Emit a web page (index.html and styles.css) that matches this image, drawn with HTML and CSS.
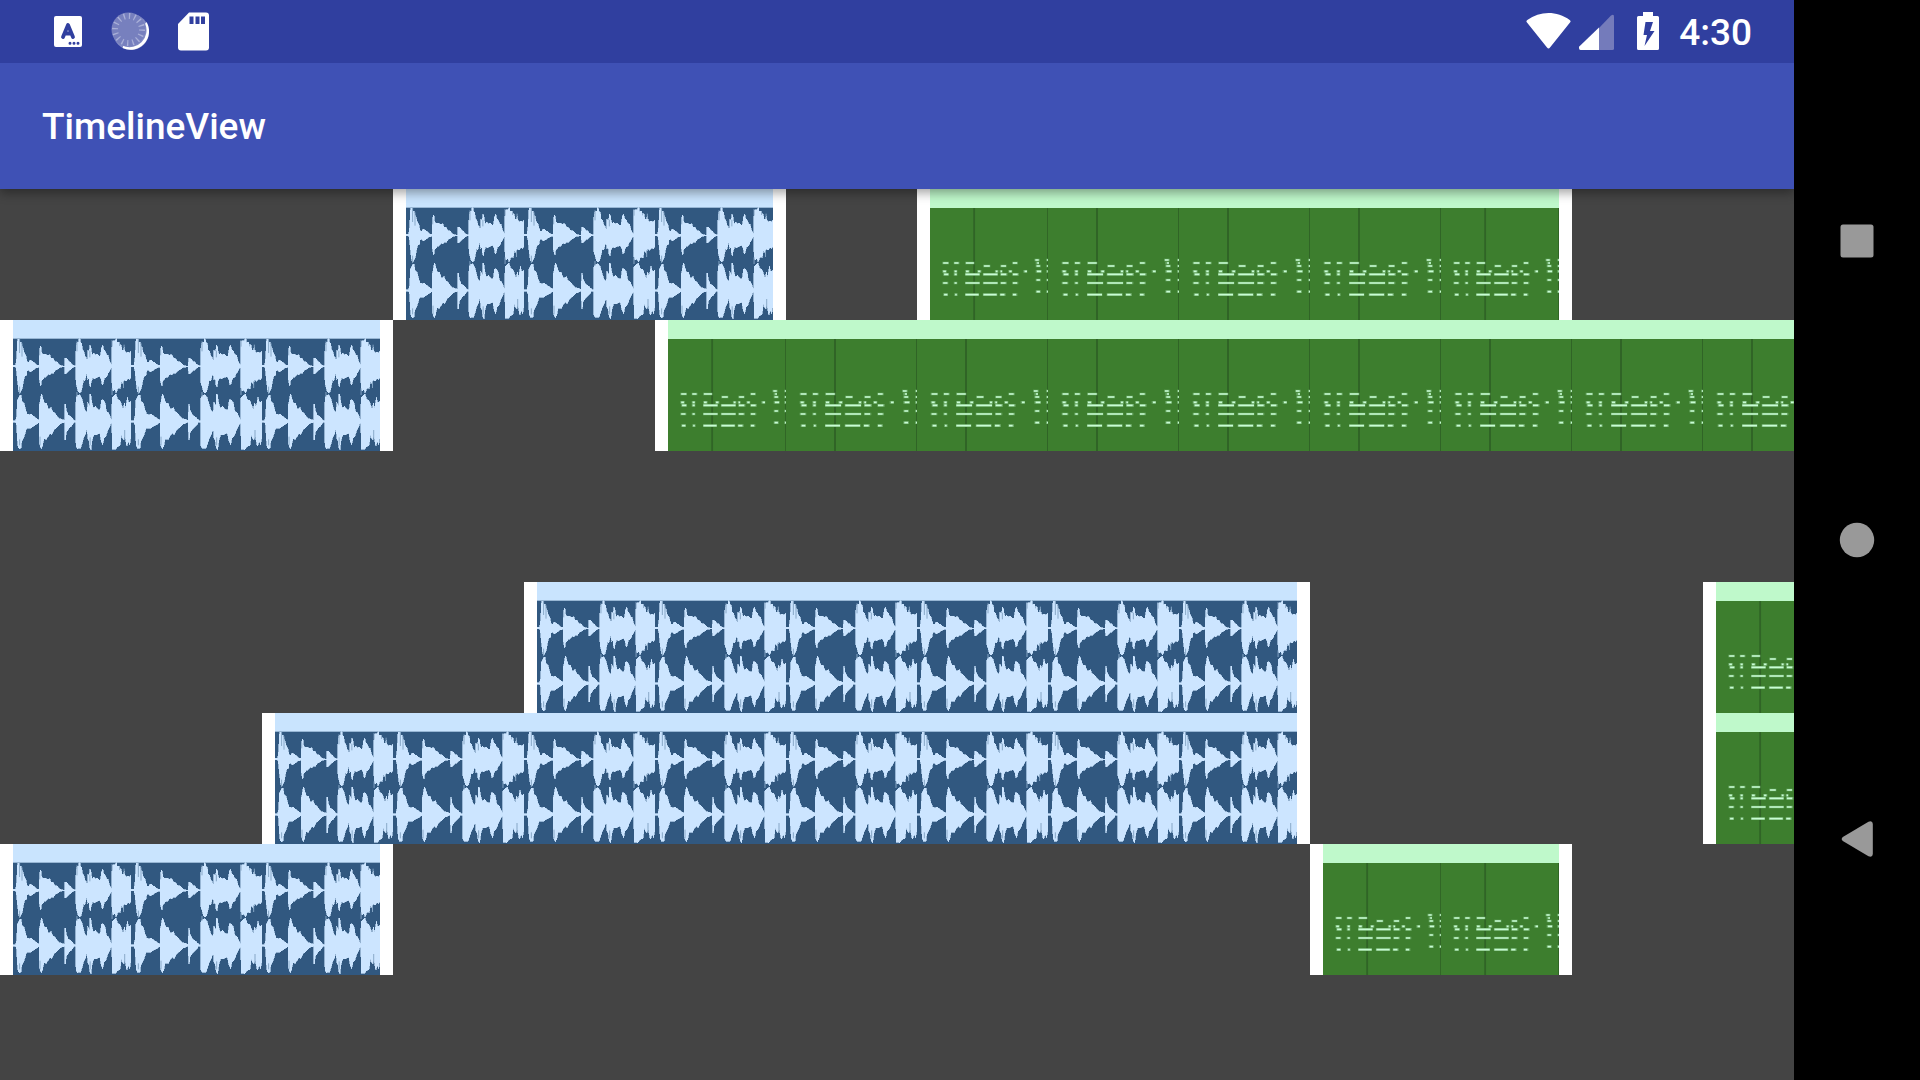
FILE: index.html
```html
<!DOCTYPE html>
<html lang="en">
<head>
<meta charset="utf-8">
<title>TimelineView</title>
<link rel="stylesheet" href="styles.css">
</head>
<body>
<svg class="sprites" aria-hidden="true">
  <!-- One bar of stereo audio -->
  <symbol id="audio" viewBox="0 0 393 393" preserveAspectRatio="none">
    <rect class="audio-body" y="54" width="393" height="339"/>
    <rect class="audio-head" width="393" height="56"/>
    <g class="wave" transform="translate(-3 54)">
      <polygon points="3,82 12,82 15,60 18,10 19,3 24,3 25,12 30,12 33,25 36,28 40,45 45,50 48,62 51,72 57,72 60,66 66,68 70,72 75,74 80,79 84,82 90,82 91,38 94,25 97,27 98,42 102,48 112,48 118,52 125,50 130,60 138,62 142,70 150,72 155,77 160,82 168,84 175,84 176,60 183,62 188,70 194,72 200,79 207,83 212,83 213,30 216,14 222,12 223,2 226,2 228,14 232,16 234,35 238,38 242,52 246,58 249,65 251,68 252,35 256,42 258,32 259,22 262,24 265,45 268,50 272,45 276,52 280,48 286,50 290,55 294,55 298,28 302,22 305,35 310,38 314,50 320,52 324,68 330,80 332,80 333,10 338,8 344,8 345,2 348,2 349,14 356,12 359,30 361,20 364,22 365,36 370,38 373,28 376,40 380,45 384,42 392,45 395,40 396,83 396,86 396,115 392,125 386,122 380,130 374,125 370,140 364,130 360,152 352,150 347,166 342,155 336,160 333,150 332,90 330,88 324,100 320,105 314,118 308,120 304,135 300,142 297,125 292,115 284,118 276,122 268,120 264,130 261,146 258,140 256,120 252,125 249,105 246,115 242,130 238,125 234,145 230,160 225,166 220,160 216,145 213,135 212,86 207,86 200,90 194,96 188,98 183,105 176,108 175,86 160,88 152,94 145,97 138,105 130,105 126,111 120,108 113,117 108,118 102,125 98,128 96,143 94,142 91,125 90,87 80,90 72,95 66,100 60,102 57,96 50,98 48,112 42,115 38,130 34,150 30,160 26,166 22,160 18,130 15,100 12,86 3,86"/>
      <polygon points="3,248 12,248 15,235 18,185 24,175 26,171 30,172 33,190 40,195 45,215 50,228 57,230 64,228 72,235 80,240 90,247 91,200 95,182 97,168 100,170 102,180 108,195 114,195 122,215 130,208 134,220 142,225 150,235 158,242 175,247 176,198 178,198 180,215 186,230 194,235 202,242 207,248 212,248 213,180 218,172 226,170 232,180 236,195 242,215 250,225 252,192 258,205 259,168 262,168 265,190 270,210 278,205 286,215 294,215 298,185 304,185 310,195 314,220 322,225 330,245 332,245 333,180 340,172 346,168 352,185 360,188 364,200 370,215 374,195 378,210 384,178 389,195 395,190 396,248 396,252 395,300 392,320 388,310 382,325 376,295 370,305 364,290 360,322 352,325 344,335 334,333 332,255 330,255 320,275 312,295 306,300 302,320 297,310 292,285 282,290 272,290 266,310 263,335 259,330 256,308 252,300 250,270 244,290 238,300 232,320 228,330 218,332 213,325 212,252 206,252 200,262 194,268 188,272 180,285 178,307 176,305 175,252 160,258 150,268 140,275 132,290 126,285 120,295 114,305 106,302 101,325 97,332 91,318 90,253 80,260 68,266 60,272 54,270 48,272 42,290 38,300 32,310 30,330 24,332 20,328 18,310 15,262 12,252 3,252"/>
    </g>
    <path class="wave-edge" d="M22 57v42M30 70v40M89 90v16M213 64v30M256 92v20M330 60v20M370 74v16M22 200v22M213 216v14M330 205v20M368 184v20M22 358v18M90 350v26M257 352v24M372 330v30"/>
  </symbol>

  <!-- One bar of MIDI notes -->
  <symbol id="midi" viewBox="0 0 393 393" preserveAspectRatio="none">
    <rect class="midi-body" y="54" width="393" height="339"/>
    <rect class="midi-head" width="393" height="57"/>
    <path class="midi-bar" d="M147 57V393"/>
    <path class="midi-end" d="M391.500 57V393"/>
    <g transform="translate(-6 198)">
      <path class="note-glow" d="M47 24h22m16 0h19m19 0h31m126 0h19m59 0h11M183 33h24m33 0h21m97 0h17m18 0h6M354 15h17m22 0h6M47 49h15m23 0h12m26 0h15m25 0h14m45 0h12m4 0h10m19 0h13m37 0h13m28 0h20m15 0h6M50 58h19m16 0h12m26 0h49m10 0h50m8 0h24m16 0h22M47 84h20m18 0h12m26 0h49m10 0h50m8 0h22m18 0h20M358 75h17m18 0h6M358 110h17m18 0h6M50 119h16m21 0h11m25 0h46m13 0h48m8 0h20m22 0h17"/>
      <path class="note" d="M50 24h17m20 0h14m25 0h26m130 0h14m67 0h6M186 33h19m38 0h16m102 0h11m24 0h3M357 15h11m28 0h3M50 49h9m29 0h7m31 0h9m31 0h8m51 0h6m10 0h5m24 0h8m43 0h8m33 0h14m21 0h3M53 58h14m21 0h7m29 0h47m13 0h47m11 0h18m22 0h16M50 84h14m24 0h7m29 0h47m13 0h47m11 0h16m24 0h14M361 75h11m24 0h3M361 110h11m24 0h3M53 119h11m26 0h5m29 0h44m16 0h44m12 0h14m28 0h11"/>
    </g>
  </symbol>
</svg>

<div class="device">
  <div class="app">
    <div class="status-bar">
      <div class="status-group notifications">
        <svg width="28" height="63" viewBox="0 0 28 63" role="img" aria-label="Keyboard">
          <rect y="16" width="28" height="31" rx="2" fill="#fff"/>
          <path d="M9 37l5-12 5 12M10.500 33.500h7" fill="none" stroke="#303f9f" stroke-width="3.800" stroke-linecap="round" stroke-linejoin="round"/>
          <path d="M16 43.300h0M20 43.300h0M24 43.300h0" stroke="#303f9f" stroke-width="3" stroke-linecap="round"/>
        </svg>
        <svg width="38" height="63" viewBox="0 0 38 63" role="img" aria-label="Loading">
          <circle cx="20" cy="32" r="18" fill="#fff" opacity=".4"/>
          <path d="M35 23A18 18 0 0 1 12 47A17.500 17.500 0 0 0 35 23Z" fill="#fff" stroke="#fff" stroke-width="2"/>
          <circle cx="17.500" cy="29.500" r="17" fill="#7780be"/>
          <circle cx="17.500" cy="29.500" r="13.500" fill="none" stroke="#a9afd8" stroke-width="6" stroke-dasharray="1.300 4.002"/>
        </svg>
        <svg width="31" height="63" viewBox="0 0 31 63" role="img" aria-label="SD card">
          <path d="M11 12.500H28a3 3 0 0 1 3 3V47.500a3 3 0 0 1-3 3H3a3 3 0 0 1-3-3V24Z" fill="#fff"/>
          <path d="M11.500 16.500h4v7.500h-4zM17.500 16.500h4v7.500h-4zM23 16.500h4v7.500h-4z" fill="#303f9f"/>
        </svg>
      </div>
      <div class="status-group system">
        <svg width="45" height="63" viewBox="0 0 45 63" role="img" aria-label="Wi-Fi">
          <path d="M.8 22.300Q-.2 21 1.300 20C14 10.700 31 10.700 43.700 20Q45.200 21 44.200 22.300L24 47.500Q22.500 49.500 21 47.500Z" fill="#fff"/>
        </svg>
        <svg class="signal" width="35" height="63" viewBox="0 0 35 63" role="img" aria-label="Mobile signal">
          <path d="M20 28L32 15.500Q35 13.500 35 16.500V48.500Q35 50 33.500 50H20Z" fill="#747bbb"/>
          <path d="M20 27.500V50H1.500Q0 50 0 48V46.800Z" fill="#fff"/>
        </svg>
        <svg class="battery" width="22" height="63" viewBox="0 0 22 63" role="img" aria-label="Battery charging">
          <path d="M6 12H16V16H20.500Q22 16 22 17.500V48.500Q22 50 20.500 50H1.500Q0 50 0 48.500V17.500Q0 16 1.500 16H6Z" fill="#fff"/>
          <path d="M8.500 22H16L13 31H17.500L7.500 46L10 35H6.500Z" fill="#303f9f"/>
        </svg>
        <time class="clock">4:30</time>
      </div>
    </div>

    <header class="app-bar"><h1>TimelineView</h1></header>

    <main class="timeline">
      <div class="clip row-1 bars-4-6">
        <svg><use href="#audio"/></svg><svg><use href="#audio"/></svg><svg><use href="#audio"/></svg>
      </div>
      <div class="clip row-1 bars-8-12">
        <svg><use href="#midi"/></svg><svg><use href="#midi"/></svg><svg><use href="#midi"/></svg><svg><use href="#midi"/></svg><svg><use href="#midi"/></svg>
      </div>
      <div class="clip row-2 bars-1-3">
        <svg><use href="#audio"/></svg><svg><use href="#audio"/></svg><svg><use href="#audio"/></svg>
      </div>
      <div class="clip row-2 bars-6-15">
        <svg><use href="#midi"/></svg><svg><use href="#midi"/></svg><svg><use href="#midi"/></svg><svg><use href="#midi"/></svg><svg><use href="#midi"/></svg><svg><use href="#midi"/></svg><svg><use href="#midi"/></svg><svg><use href="#midi"/></svg><svg><use href="#midi"/></svg><svg><use href="#midi"/></svg>
      </div>
      <div class="clip row-4 bars-5-10">
        <svg><use href="#audio"/></svg><svg><use href="#audio"/></svg><svg><use href="#audio"/></svg><svg><use href="#audio"/></svg><svg><use href="#audio"/></svg><svg><use href="#audio"/></svg>
      </div>
      <div class="clip row-4 bars-14-15">
        <svg><use href="#midi"/></svg><svg><use href="#midi"/></svg>
      </div>
      <div class="clip row-5 bars-3-10">
        <svg><use href="#audio"/></svg><svg><use href="#audio"/></svg><svg><use href="#audio"/></svg><svg><use href="#audio"/></svg><svg><use href="#audio"/></svg><svg><use href="#audio"/></svg><svg><use href="#audio"/></svg><svg><use href="#audio"/></svg>
      </div>
      <div class="clip row-5 bars-14-15">
        <svg><use href="#midi"/></svg><svg><use href="#midi"/></svg>
      </div>
      <div class="clip row-6 bars-1-3">
        <svg><use href="#audio"/></svg><svg><use href="#audio"/></svg><svg><use href="#audio"/></svg>
      </div>
      <div class="clip row-6 bars-11-12">
        <svg><use href="#midi"/></svg><svg><use href="#midi"/></svg>
      </div>
    </main>
  </div>

  <nav class="nav-bar" aria-label="System">
    <button type="button" aria-label="Recent apps">
      <svg width="36" height="36" viewBox="0 0 36 36"><rect x="1.500" y="1.500" width="33" height="33" rx="2.500"/></svg>
    </button>
    <button type="button" aria-label="Home">
      <svg width="36" height="36" viewBox="0 0 36 36"><circle cx="18" cy="18" r="17.200"/></svg>
    </button>
    <button type="button" aria-label="Back">
      <svg width="36" height="36" viewBox="0 0 36 36"><path d="M3.800 16L29.500.7Q33.600-.8 33.800 3V33Q33.600 36.800 29.500 35.300L3.800 20Q1.600 18 3.800 16Z"/></svg>
    </button>
  </nav>
</div>
</body>
</html>
```

FILE: styles.css
```css
* {
  box-sizing: border-box;
}

body {
  margin: 0;
  font-family: Roboto, "Liberation Sans", sans-serif;
  background: #444;
}

.sprites {
  display: block;
  width: 0;
  height: 0;
}

.device {
  display: flex;
  min-height: 100vh;
}

.app {
  flex: 1;
  min-width: 0;
  display: flex;
  flex-direction: column;
  overflow: hidden;
}

/* Status bar */
.status-bar {
  position: relative;
  z-index: 2;
  display: flex;
  justify-content: space-between;
  height: 63px;
  padding: 0 42px 0 54px;
  background: #303f9f;
}

.status-group {
  display: flex;
}

.notifications {
  gap: 29px;
}

.system {
  gap: 20px;
}

.signal {
  margin-left: -12px;
}

.battery {
  margin-left: 3px;
}

.clock {
  color: #fff;
  font-size: 37px;
  font-weight: 500;
  line-height: 66px;
}

/* App bar */
.app-bar {
  position: relative;
  z-index: 1;
  padding: 2px 42px 0;
  background: #3f51b5;
  box-shadow: 0 4px 10px rgba(0, 0, 0, 0.36);
}

.app-bar h1 {
  margin: 0;
  color: #fff;
  font-size: 37px;
  font-weight: 500;
  line-height: 124px;
}

/* Timeline */
.timeline {
  flex: 1;
  display: grid;
  grid-template-columns: repeat(15, 131px);
  grid-auto-rows: 131px;
  background: #444;
}

.clip {
  display: flex;
  padding: 0 13px;
  background: #fff;
}

.clip svg {
  flex: 131 1 0;
  display: block;
  min-width: 0;
  height: 131px;
}

.clip svg:first-child,
.clip svg:last-child {
  flex-grow: 118;
}

.row-1 { grid-row: 1; }
.row-2 { grid-row: 2; }
.row-4 { grid-row: 4; }
.row-5 { grid-row: 5; }
.row-6 { grid-row: 6; }

.bars-1-3 { grid-column: 1 / 4; }
.bars-3-10 { grid-column: 3 / 11; }
.bars-4-6 { grid-column: 4 / 7; }
.bars-5-10 { grid-column: 5 / 11; }
.bars-6-15 { grid-column: 6 / 16; }
.bars-8-12 { grid-column: 8 / 13; }
.bars-11-12 { grid-column: 11 / 13; }
.bars-14-15 { grid-column: 14 / 16; }

.audio-head { fill: #c9e4fe; }
.audio-body { fill: #315880; }
.wave { fill: #cce5ff; stroke: #cce5ff; stroke-width: 2px; shape-rendering: crispEdges; }
.wave-edge { fill: none; stroke: #86a6c6; stroke-width: 3px; }

.midi-head { fill: #bff9cb; }
.midi-body { fill: #3d7e2e; }
.midi-bar { stroke: #306426; stroke-width: 6px; }
.midi-end { stroke: #306426; stroke-width: 3px; }
.note-glow { fill: none; stroke: #69a765; stroke-width: 8px; }
.note { fill: none; stroke: #c8fdd4; stroke-width: 5px; }

/* System navigation */
.nav-bar {
  flex: none;
  display: flex;
  flex-direction: column;
  width: 126px;
  padding: 92px 0;
  background: #000;
}

.nav-bar button {
  flex: 1;
  display: flex;
  align-items: center;
  justify-content: center;
  padding: 0;
  border: 0;
  background: none;
}

.nav-bar svg {
  fill: #999;
}
```
